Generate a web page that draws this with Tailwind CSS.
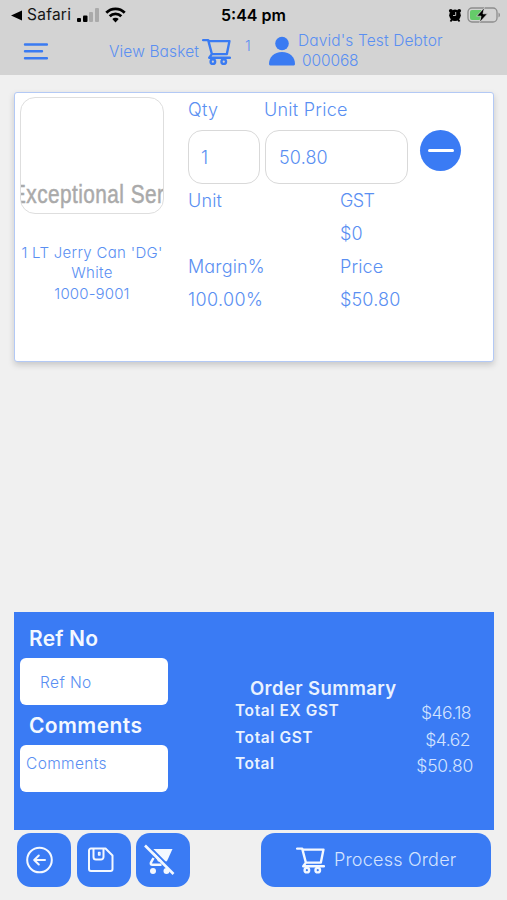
<!DOCTYPE html>
<html lang="en">
<head>
<meta charset="utf-8">
<title>Basket</title>
<script src="https://cdn.jsdelivr.net/npm/@tailwindcss/browser@4"></script>
</head>
<body class="w-[507px] h-[900px] overflow-hidden bg-[#f0f0f0] font-['Inter',sans-serif] text-[#5a8ff2] flex flex-col whitespace-nowrap">
<svg class="hidden">
  <symbol id="cart" viewBox="0 0 28 26" fill="none" stroke="currentColor" stroke-width="2.300" stroke-linejoin="round" stroke-linecap="round">
    <path d="M1 1.500h5l3.500 13.500h14.500l2.500-12.500H6.500M9.500 15l-2.500 3.500h20"/>
    <circle cx="10.500" cy="22.300" r="2.200"/><circle cx="21" cy="22.300" r="2.200"/>
  </symbol>
</svg>
<header class="h-[75px] shrink-0 bg-[#d3d3d3]">
  <div class="h-[30px] flex items-center text-black pl-[11px] pr-[6px]">
    <svg class="w-[11px] h-[11px]" viewBox="0 0 11 11"><path d="M0 5.500 11 .5v10z"/></svg>
    <span class="ml-[5px] w-[49px] text-[15.5px] tracking-[0.25px] leading-[30px] text-[#151515]">Safari</span>
    <svg class="w-[24px] h-[16px]" viewBox="0 0 24 16"><rect x="1" y="11" width="4" height="4" rx="1"/><rect x="7" y="8.500" width="4.500" height="6.500" rx="1"/><rect x="13" y="5" width="4" height="10" rx="1" fill="#aaa"/><rect x="19" y="1" width="4" height="14" rx="1" fill="#aaa"/></svg>
    <svg class="ml-[5px] w-[21px] h-[16px]" viewBox="0 0 21 16" fill="none" stroke="#000" stroke-width="2.800"><path d="M1.300 5.700a13 13 0 0 1 18.400 0M4.700 9.300a8.200 8.200 0 0 1 11.600 0"/><path d="M7.300 12a4.500 4.500 0 0 1 6.400 0L10.500 15.500z" fill="#000" stroke="none"/></svg>
    <span class="ml-[95px] w-[69px] text-[16px] font-semibold leading-[31px]">5:44 pm</span>
    <svg class="ml-auto w-[14px] h-[14px]" viewBox="0 0 14 14"><circle cx="7" cy="7.300" r="5.800"/><circle cx="2.800" cy="2.800" r="1.900"/><circle cx="11.200" cy="2.800" r="1.900"/><path d="m2.500 13.500 2-3M11.500 13.500l-2-3" stroke="#000" stroke-width="1.800"/><path d="M7.700 4v3.500H5" fill="none" stroke="#bbb" stroke-width="1"/></svg>
    <svg class="ml-[5px] w-[34px] h-[18px]" viewBox="0 0 34 18"><rect x="1" y="2" width="29" height="14" rx="4" fill="none" stroke="#8d8d8d" stroke-width="1.300"/><path d="M5 4h9v10H5a2 2 0 0 1-2-2V6a2 2 0 0 1 2-2z" fill="#65cb69"/><path d="M31.500 6.500c2 1 2 4 0 5z" fill="#8d8d8d"/><path d="m17.500 1.500-8 8.700h4.500l-1.500 6.300 8-8.700H16z" stroke="#d3d3d3" stroke-width=".8"/></svg>
  </div>
  <div class="h-[45px] flex pl-[23px] text-[#5a8ff2] font-light [font-feature-settings:'cv11'_1]">
    <svg class="mt-[12px] w-[25px] h-[18px]" viewBox="0 0 25 18" stroke="#3a7bf2" stroke-width="2.400" stroke-linecap="round"><path d="M2 2.500h22M2 9.300h17M2 16.300h22"/></svg>
    <span class="ml-[61px] mt-[12px] w-[93px] text-[15.5px] leading-[20px] tracking-[0.13px]">View Basket</span>
    <svg class="mt-[8px] w-[29px] h-[28px] text-[#3a7bf2]"><use href="#cart"/></svg>
    <span class="ml-[14px] mt-[6px] w-[21px] text-[14.5px] leading-[20px]">1</span>
    <svg class="ml-[2px] mt-[6px] w-[28px] h-[30px]" viewBox="0 0 28 30" fill="#3a7bf2"><circle cx="14" cy="7.500" r="6.800"/><path d="M1 28c0-7 5-12 13-12s13 5 13 12c0 1-1 1.500-2 1.500H3c-1 0-2-.5-2-1.500z"/></svg>
    <div class="ml-[2px] mt-px text-[15.5px] leading-[20px]"><div class="tracking-[0.13px]">David's Test Debtor</div><div class="ml-[4px] tracking-[-0.1px]">000068</div></div>
  </div>
</header>

<main class="mt-[17px] ml-[14px] w-[480px] h-[270px] shrink-0 flex rounded-[3px] border border-[#b3c9f5] bg-white shadow-[0_3px_6px_rgba(0,0,0,0.17)] [font-feature-settings:'cv11'_1] font-light">
  <section class="ml-[5px] mt-[4px] w-[144px] flex flex-col">
    <div class="h-[117px] border border-[#dedede] rounded-[15px] overflow-hidden pt-[81px] pr-[8px] flex justify-center">
      <span class="font-['Liberation_Sans',sans-serif] font-normal text-[26px] leading-[30px] text-[#aaa] [-webkit-text-stroke:0.5px_#aaa] tracking-[0.55px] origin-center scale-x-[.8]">Exceptional Ser</span>
    </div>
    <div class="mt-[29px] text-center text-[15px] leading-[20.3px]"><div class="tracking-[0.3px]">1 LT Jerry Can 'DG'</div><div class="tracking-[0.3px]">White</div><div class="tracking-[0.15px]">1000-9001</div></div>
  </section>
  <section class="ml-[24px] w-[280px] text-[18px] leading-[20px]">
    <div class="flex pt-[7px]"><span class="w-[76px] tracking-[0.3px]">Qty</span><span class="tracking-[0.25px]">Unit Price</span></div>
    <div class="mt-[10px] flex gap-[5px]">
      <div class="w-[72px] h-[54px] rounded-[14px] border border-[#d9d9d9] pl-[12px] leading-[54px]">1</div>
      <div class="w-[143px] h-[54px] rounded-[14px] border border-[#d9d9d9] pl-[13px] leading-[54px] tracking-[0.15px]">50.80</div>
      <div class="ml-[7px] w-[41px] h-[41px] rounded-full bg-[#3a7bf4] flex items-center justify-center"><div class="w-[26px] h-[3px] rounded bg-white"></div></div>
    </div>
    <div class="mt-[7px] grid grid-cols-[152px_1fr] auto-rows-[20px] gap-y-[13px] tracking-[0.15px]">
      <span>Unit</span><span class="tracking-[-0.6px]">GST</span><span></span><span>$0</span><span>Margin%</span><span>Price</span><span class="tracking-[0.4px]">100.00%</span><span>$50.80</span>
    </div>
  </section>
</main>

<section class="mt-[250px] ml-[14px] w-[480px] h-[218px] shrink-0 bg-[#3a7bf4] flex">
  <div class="w-[154px] pl-[6px] pt-[14px]">
    <h2 class="pl-[9px] text-[21px] leading-[26px] h-[26px] font-semibold tracking-[0.2px] text-[#f3f8ff]">Ref No</h2>
    <div class="mt-[6px] w-[148px] h-[47px] rounded-[6px] bg-white pl-[20px] text-[15.5px] font-light leading-[50px] tracking-[0.4px] [font-feature-settings:'cv11'_1]">Ref No</div>
    <h2 class="mt-[7px] pl-[9px] text-[21px] leading-[28px] h-[27px] font-semibold tracking-[0.4px] text-[#f3f8ff]">Comments</h2>
    <div class="mt-[6px] w-[148px] h-[47px] rounded-[6px] bg-white pl-[6px] text-[15.5px] font-light leading-[37px] tracking-[0.35px] [font-feature-settings:'cv11'_1]">Comments</div>
  </div>
  <div class="ml-[67px] w-[239px] pt-[65px] text-[#e9f2ff]">
    <h3 class="pl-[15px] text-[18.5px] leading-[22px] h-[23px] font-semibold tracking-[0.4px]">Order Summary</h3>
    <div class="grid grid-cols-[1fr_auto] auto-rows-[26.5px] text-[15.5px] leading-[22px] font-semibold">
      <span class="tracking-[0.6px]">Total EX GST</span><span class="pt-[2px] pr-[3px] text-right text-[17.5px] font-light tracking-[-0.5px] text-[#d3e3ff]">$46.18</span>
      <span class="tracking-[0.6px]">Total GST</span><span class="pt-[2px] pr-[4px] text-right text-[17.5px] font-light tracking-[-0.5px] text-[#d3e3ff]">$4.62</span>
      <span class="tracking-[0.5px]">Total</span><span class="pt-[2px] pr-[1px] text-right text-[17.5px] font-light tracking-[-0.2px] text-[#d3e3ff]">$50.80</span>
    </div>
  </div>
</section>

<footer class="mt-[3px] ml-[17px] w-[474px] flex gap-[5.5px] text-[#f3f8ff]">
  <div class="w-[54px] h-[54px] rounded-[14px] bg-[#3a7bf4] pl-[9px] pt-[13px]"><svg class="w-[27px] h-[28px]" viewBox="0 0 27 28" fill="none" stroke="currentColor" stroke-width="2" stroke-linecap="round" stroke-linejoin="round"><circle cx="13.500" cy="14" r="12.300"/><path d="M19 14H8.500m4.300-4.500L8.200 14l4.600 4.500"/></svg></div>
  <div class="w-[54px] h-[54px] rounded-[14px] bg-[#3a7bf4] pl-[11px] pt-[14px]"><svg class="w-[26px] h-[26px]" viewBox="0 0 26 26" fill="none" stroke="currentColor" stroke-width="2" stroke-linejoin="round"><path d="M3 1.500h14.500l7 7V22a2 2 0 0 1-2 2H3a2 2 0 0 1-2-2V3.500a2 2 0 0 1 2-2z"/><path d="M5.500 1.500V10a2.500 2.500 0 0 0 2.500 2.500h5a2.500 2.500 0 0 0 2.500-2.500V1.500"/><path d="M10.500 5.500h1.500v2.500h-1.500z" stroke-width="1.300"/></svg></div>
  <div class="w-[54px] h-[54px] rounded-[14px] bg-[#3a7bf4] pl-[7px] pt-[11px]"><svg class="w-[32px] h-[33px]" viewBox="0 0 32 33" fill="currentColor"><path d="M9 5h20.500l-5 11c-.5 1-1 1.500-2 1.500h-7.500z"/><path d="M10.500 14 8 18.500c-.5 1.500 0 2.300 1.500 2.300h9" fill="none" stroke="currentColor" stroke-width="2.500"/><circle cx="10" cy="27" r="3"/><circle cx="23.500" cy="27" r="3"/><path d="m4 0 28 28.500" stroke="#3a7bf4" stroke-width="2"/><path d="m2 1.500 28.500 28.500" stroke="currentColor" stroke-width="2.600"/></svg></div>
  <div class="ml-auto w-[230px] h-[54px] rounded-[14px] bg-[#3a7bf4] flex pl-[35px]"><svg class="mt-[14px] w-[29px] h-[27px]"><use href="#cart"/></svg><span class="ml-[9px] text-[18px] font-light leading-[54px] tracking-[0.2px] text-[#d3e3ff]">Process Order</span></div>
</footer>
</body>
</html>
